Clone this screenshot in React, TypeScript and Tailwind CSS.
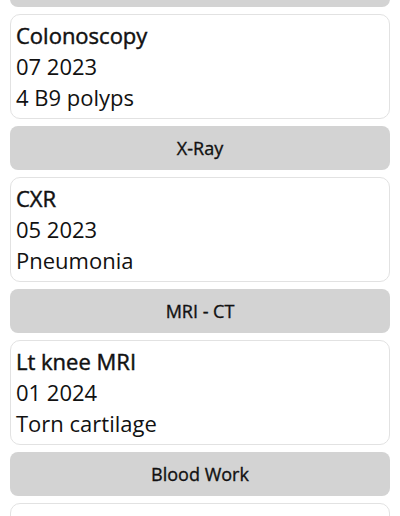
import React from "react";

type Record = { title: string; date: string; note: string };

const sections: { name: string; items: Record[] }[] = [
  { name: "Procedures", items: [{ title: "Colonoscopy", date: "07 2023", note: "4 B9 polyps" }] },
  { name: "X-Ray", items: [{ title: "CXR", date: "05 2023", note: "Pneumonia" }] },
  { name: "MRI - CT", items: [{ title: "Lt knee MRI", date: "01 2024", note: "Torn cartilage" }] },
  { name: "Blood Work", items: [{ title: "PSA", date: "03 2024", note: "Normal" }] },
];

const App = () => {
  return (
    <div className="min-h-screen bg-white overflow-hidden" style={{ fontFamily: '"Open Sans", sans-serif' }}>
      <div className="mt-[-37px] px-[10px] flex flex-col gap-[7px] text-[#111]">
        {sections.map((s) => (
          <React.Fragment key={s.name}>
            <div className="h-[44px] rounded-lg bg-[#d3d3d3] flex items-center justify-center text-[18px] [-webkit-text-stroke:0.35px_#111]">
              {s.name}
            </div>
            {s.items.map((r) => (
              <div
                key={r.title}
                className="h-[105px] rounded-[10px] border border-[#e2e2e2] px-[5px] py-[5px] text-[22px] leading-[31px]"
              >
                <div className="[-webkit-text-stroke:0.45px_#111]">{r.title}</div>
                <div>{r.date}</div>
                <div>{r.note}</div>
              </div>
            ))}
          </React.Fragment>
        ))}
      </div>
    </div>
  );
};

export default App;
